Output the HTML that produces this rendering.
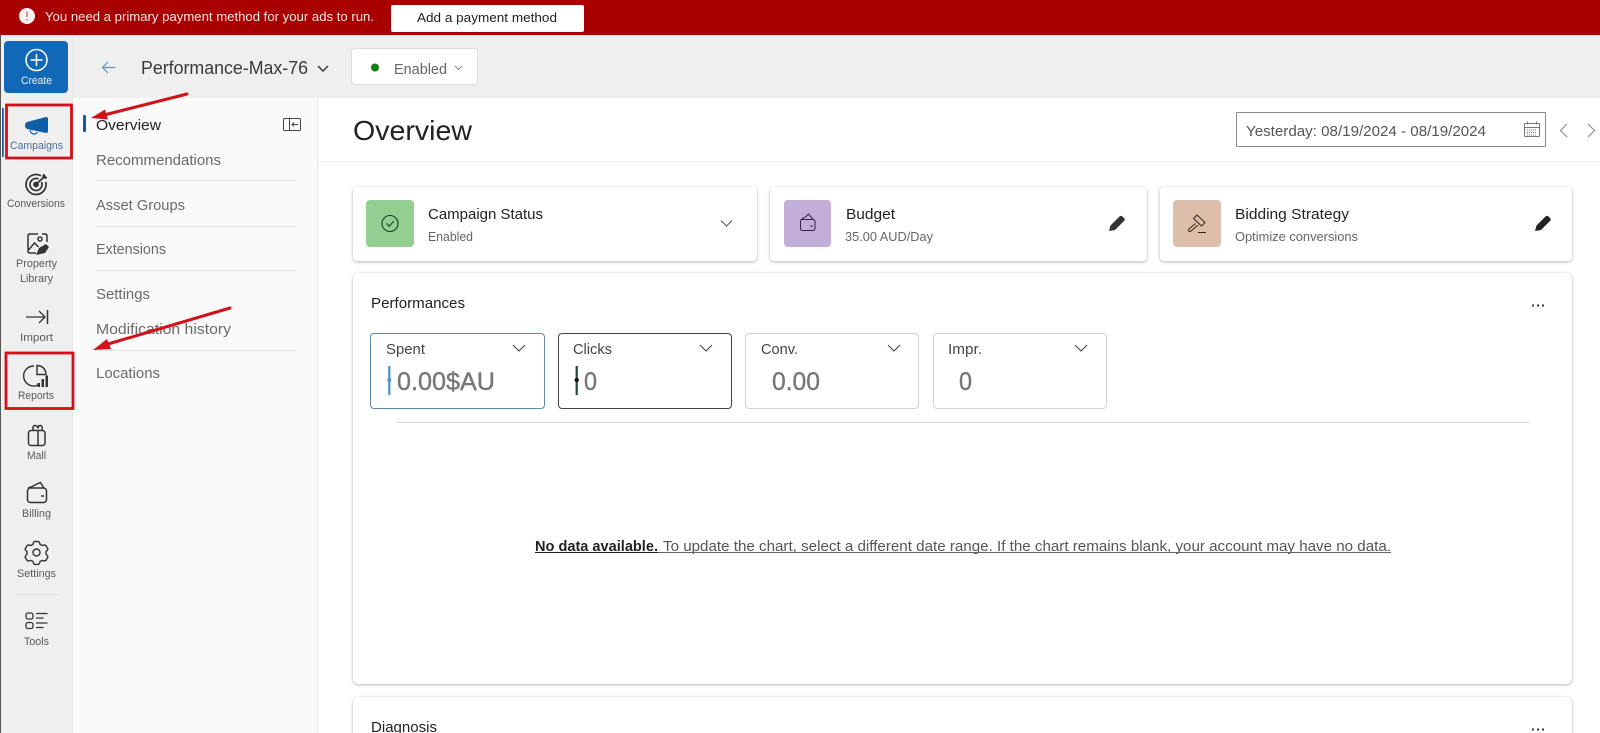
<!DOCTYPE html>
<html lang="en"><head><meta charset="utf-8"><title>Performance-Max-76 Overview</title>
<style>
html,body{margin:0;padding:0;width:1600px;height:733px;overflow:hidden;background:#fff;font-family:"Liberation Sans",sans-serif}
#wrap{position:relative;width:1600px;height:733px;overflow:hidden;background:#fff}
.b{position:absolute;box-sizing:border-box}
.card{background:#fff;border-radius:4px;box-shadow:0 1px 3px rgba(0,0,0,.28),0 0 2px rgba(0,0,0,.05)}
.m{background:#fff;border:1px solid #d2d2d2;border-radius:4px;top:333px;height:76px}
svg{position:absolute;left:0;top:0;display:block}
text{font-family:"Liberation Sans",sans-serif}
.sl{font-size:11px;fill:#5a5a5a}
.nv{font-size:15px;fill:#6a6a6a}
.ct{font-size:15px;fill:#222}
.cs{font-size:12.5px;fill:#666}
.ml{font-size:15px;fill:#444}
.mv{font-size:25px;fill:#777;stroke:#777;stroke-width:.4px}
</style></head><body>
<div id="wrap">
<div class="b" style="left:0;top:35px;width:1600px;height:63px;background:#efefef"></div>
<div class="b" style="left:0;top:35px;width:73px;height:698px;background:#efefef;border-right:1px solid #e6e6e6"></div>
<div class="b" style="left:0;top:35px;width:1px;height:698px;background:#555"></div>
<div class="b" style="left:74px;top:98px;width:244px;height:635px;background:#fafafa;border-right:1px solid #e9e9e9"></div>
<div class="b" style="left:0;top:0;width:1600px;height:35px;background:#a80000"></div>
<div class="b" style="left:391px;top:5px;width:193px;height:27px;background:#fff;border-radius:2px"></div>
<div class="b" style="left:4px;top:41px;width:64px;height:52px;background:#1068b6;border-radius:4px"></div>
<div class="b" style="left:351px;top:48px;width:127px;height:37px;background:#fff;border:1px solid #ddd;border-radius:4px"></div>
<div class="b" style="left:318px;top:161px;width:1282px;height:1px;background:#f0f0f0"></div>
<div class="b" style="left:1236px;top:112px;width:310px;height:35px;background:#fff;border:1px solid #8a8a8a;border-radius:1px"></div>
<div class="b card" style="left:353px;top:187px;width:404px;height:74px"></div>
<div class="b card" style="left:770px;top:187px;width:377px;height:74px"></div>
<div class="b card" style="left:1160px;top:187px;width:412px;height:74px"></div>
<div class="b card" style="left:353px;top:273px;width:1219px;height:411px;border-radius:6px"></div>
<div class="b card" style="left:353px;top:697px;width:1219px;height:60px;border-radius:6px"></div>
<div class="b" style="left:366px;top:200px;width:48px;height:47px;background:#95ce91;border-radius:4px"></div>
<div class="b" style="left:784px;top:200px;width:47px;height:47px;background:#c3add9;border-radius:4px"></div>
<div class="b" style="left:1173px;top:200px;width:48px;height:47px;background:#dcbeaa;border-radius:4px"></div>
<div class="b m" style="left:370px;width:175px;border-color:#5f8aa5"></div>
<div class="b m" style="left:558px;width:174px;border-color:#444"></div>
<div class="b m" style="left:745px;width:174px"></div>
<div class="b m" style="left:933px;width:174px"></div>
<div class="b" style="left:396px;top:422px;width:1134px;height:1px;background:#d8d8d8"></div>

<svg width="1600" height="733" viewBox="0 0 1600 733" xmlns="http://www.w3.org/2000/svg">
<!-- banner -->
<circle cx="27" cy="16" r="8" fill="#fbf3f3"/><path d="M27 11.500v5.500M27 19v1.400" stroke="#c98080" stroke-width="1.600" fill="none"/>
<text x="45" y="21" font-size="13" fill="#f7e6e6" textLength="329" lengthAdjust="spacingAndGlyphs">You need a primary payment method for your ads to run.</text>
<text x="417" y="22" font-size="13" fill="#222" textLength="140" lengthAdjust="spacingAndGlyphs">Add a payment method</text>
<!-- header -->
<path d="M102.500 67.500h13M108 62l-5.500 5.500 5.500 5.500" stroke="#5c92c4" stroke-width="1.200" fill="none"/>
<text x="141" y="74" font-size="18" fill="#3a3a3a" textLength="167" lengthAdjust="spacingAndGlyphs">Performance-Max-76</text>
<path d="M318 66l5 5 5-5" stroke="#333" stroke-width="1.400" fill="none"/>
<circle cx="375" cy="67.500" r="4" fill="#107c10"/>
<text x="394" y="74" font-size="15" fill="#666" textLength="53" lengthAdjust="spacingAndGlyphs">Enabled</text>
<path d="M455 66l3.500 3.500 3.500-3.500" stroke="#888" stroke-width="1" fill="none"/>
<!-- create -->
<circle cx="36.500" cy="60" r="10.500" fill="none" stroke="#fff" stroke-width="1.500"/><path d="M36.500 54v12M30.500 60h12" stroke="#fff" stroke-width="1.500"/>
<text x="21" y="84" font-size="11" fill="#e8f1fa" textLength="31" lengthAdjust="spacingAndGlyphs">Create</text>
<!-- campaigns -->
<rect x="2" y="108" width="1.800" height="49" fill="#2a5f9e"/>
<path d="M27 122L46 117Q48 117 48 119V131Q48 133 46 133L27 129Q25 128 25 125.500Q25 123 27 122Z" fill="#0f5fa8"/>
<path d="M30 130q1 4 4 4t3-2" fill="none" stroke="#0f5fa8" stroke-width="1.200"/>
<text x="10" y="149" font-size="11" fill="#4c6f9c" textLength="53" lengthAdjust="spacingAndGlyphs">Campaigns</text>
<rect x="6.500" y="105" width="65" height="53" fill="none" stroke="#d4101a" stroke-width="2.800"/>
<!-- conversions -->
<g fill="none" stroke="#333" stroke-width="1.700"><path d="M41 175.800A10 10 0 1 0 45.700 181.900"/><path d="M38.500 179A6 6 0 1 0 41.500 182"/><circle cx="36" cy="184.500" r="2" fill="#333"/><path d="M36.500 184l9-8.500M43 178l.8-4M43 178l4-.5"/></g>
<text x="7" y="207" class="sl" textLength="58" lengthAdjust="spacingAndGlyphs">Conversions</text>
<!-- property -->
<g fill="none" stroke="#333" stroke-width="1.500"><path d="M38 234H30q-2 0-2 2v15q0 2 2 2h6M42 234h3q2 0 2 2v6"/><circle cx="40" cy="239" r="2"/><path d="M28.500 250l6-7 4 4"/></g>
<path d="M36 255l3-7 7-4 3 3-4 6z" fill="#333"/>
<text x="16" y="267" class="sl" textLength="41" lengthAdjust="spacingAndGlyphs">Property</text>
<text x="20" y="282" class="sl" textLength="33" lengthAdjust="spacingAndGlyphs">Library</text>
<!-- import -->
<path d="M26 317h19M39 311l6 6-6 6" fill="none" stroke="#333" stroke-width="1.300"/><path d="M47.500 310v14" stroke="#333" stroke-width="1.500"/>
<text x="20" y="341" class="sl" textLength="33" lengthAdjust="spacingAndGlyphs">Import</text>
<!-- reports -->
<g fill="none" stroke="#333" stroke-width="1.400"><path d="M34 366a10 10 0 1 0 4 19"/><path d="M37 365.500q8.500 .5 9 9h-9z"/></g>
<path d="M37.500 383h2.500v4h-2.500zM41.500 379h2.500v8h-2.500zM45.500 375.500h2.500v11.500h-2.500z" fill="#333"/>
<text x="18" y="399" class="sl" textLength="36" lengthAdjust="spacingAndGlyphs">Reports</text>
<rect x="6" y="353" width="67" height="55.500" fill="none" stroke="#d4101a" stroke-width="2.800"/>
<!-- mall -->
<g fill="none" stroke="#333" stroke-width="1.500"><rect x="28.500" y="430.500" width="16.500" height="15" rx="2.500"/><path d="M38 430.500V445M33 430.500v-2.500q0-2.500 2.200-2.500t2.800 3M38 428.500q0-3 2.200-3t2 3v2"/></g>
<text x="27" y="459" class="sl" textLength="19" lengthAdjust="spacingAndGlyphs">Mall</text>
<!-- billing -->
<g fill="none" stroke="#333" stroke-width="1.500"><rect x="27.500" y="488" width="19" height="14.500" rx="3"/><path d="M28 488l3-1 7-3.500 2.500-1 3 5M41 496h3"/></g>
<text x="22" y="517" class="sl" textLength="29" lengthAdjust="spacingAndGlyphs">Billing</text>
<!-- settings -->
<g fill="none" stroke="#333" stroke-width="1.400"><circle cx="36.500" cy="552.500" r="3.500"/><path d="M33.500 542.500l1-1h4l1 1 .6 2 2.300 1 2-.6 1.500 .6 2 3.400-.5 1.300-1.400 1.500v2.500l1.400 1.500.5 1.300-2 3.400-1.500 .6-2-.6-2.300 1-.6 2-1 1h-4l-1-1-.6-2-2.300-1-2 .6-1.500-.6-2-3.400.5-1.300 1.400-1.500v-2.500l-1.400-1.500-.5-1.300 2-3.400 1.500-.6 2 .6 2.300-1z"/></g>
<text x="17" y="577" class="sl" textLength="39" lengthAdjust="spacingAndGlyphs">Settings</text>
<path d="M16 594.500h44" stroke="#e2e2e2"/>
<!-- tools -->
<g fill="none" stroke="#333" stroke-width="1.300"><rect x="26" y="613" width="7" height="6" rx="2"/><rect x="26" y="622.500" width="7" height="6" rx="2"/><path d="M36 613.500h11.500M36 618h7.500M36 623h11.500M36 627.500h7.500"/></g>
<text x="24" y="645" class="sl" textLength="25" lengthAdjust="spacingAndGlyphs">Tools</text>
<!-- nav -->
<rect x="83" y="115" width="3" height="17" rx="1" fill="#0f5c9e"/>
<text x="96" y="130" font-size="15" fill="#222" textLength="65" lengthAdjust="spacingAndGlyphs">Overview</text>
<g fill="none" stroke="#444" stroke-width="1"><rect x="283.500" y="118.500" width="17" height="12" rx="1.500"/><path d="M289.500 118.500v12M298 124.500h-6M294 122.500l-2 2 2 2"/></g>
<text x="96" y="165" class="nv" textLength="125" lengthAdjust="spacingAndGlyphs">Recommendations</text>
<text x="96" y="210" class="nv" textLength="89" lengthAdjust="spacingAndGlyphs">Asset Groups</text>
<text x="96" y="254" class="nv" textLength="70" lengthAdjust="spacingAndGlyphs">Extensions</text>
<text x="96" y="299" class="nv" textLength="54" lengthAdjust="spacingAndGlyphs">Settings</text>
<text x="96" y="334" class="nv" textLength="135" lengthAdjust="spacingAndGlyphs">Modification history</text>
<text x="96" y="378" class="nv" textLength="64" lengthAdjust="spacingAndGlyphs">Locations</text>
<path d="M96 180.500h200M96 226.500h200M96 270.500h200M96 350.500h200" stroke="#e4e4e4"/>
<!-- heading & date -->
<text x="353" y="140" font-size="28" fill="#222" textLength="119" lengthAdjust="spacingAndGlyphs">Overview</text>
<text x="1246" y="136" font-size="15" fill="#555" textLength="240" lengthAdjust="spacingAndGlyphs">Yesterday: 08/19/2024 - 08/19/2024</text>
<g fill="none" stroke="#777" stroke-width="1"><rect x="1524.500" y="123.500" width="15" height="13" rx="1"/><path d="M1524.500 127.500h15M1527.500 121.500v3M1536.500 121.500v3"/><path d="M1527 130h10M1527 132.500h10M1527 135h10" stroke-dasharray="1 1"/></g>
<path d="M1567 124l-6.500 6.500 6.500 6.500M1588 124l6.500 6.500-6.500 6.500" fill="none" stroke="#888" stroke-width="1.100"/>
<!-- cards -->
<circle cx="390" cy="223.500" r="8" fill="none" stroke="#14401c" stroke-width="1.100"/><path d="M386.500 223.500l2.700 2.700 4.500-5" fill="none" stroke="#14401c" stroke-width="1.100"/>
<text x="428" y="219" class="ct" textLength="115" lengthAdjust="spacingAndGlyphs">Campaign Status</text>
<text x="428" y="241" class="cs" textLength="45" lengthAdjust="spacingAndGlyphs">Enabled</text>
<path d="M721 220.500l5.500 5.500 5.500-5.500" fill="none" stroke="#555" stroke-width="1.100"/>
<g fill="none" stroke="#2f1f47" stroke-width="1"><rect x="800.500" y="219.500" width="14.500" height="11" rx="2"/><path d="M801 219.500l5-3 2.500-2.500 3 3.500 1.500 2M810.500 226h2.500"/></g>
<text x="846" y="219" class="ct" textLength="49" lengthAdjust="spacingAndGlyphs">Budget</text>
<text x="845" y="241" class="cs" textLength="88" lengthAdjust="spacingAndGlyphs">35.00 AUD/Day</text>
<path d="M1109 231l1.500-5.500 9-9q1.500-1.500 3 0l1.500 1.500q1.500 1.500 0 3l-9 9z" fill="#333"/>
<g fill="none" stroke="#3a2418" stroke-width="1"><path d="M1193.500 218.500L1197 215 1205 222.500 1201.500 226Z"/><path d="M1195.500 223.500L1188.500 229.500Q1188 231.500 1190.500 231.500L1198 225"/><path d="M1198 232.500h8"/></g>
<text x="1235" y="219" class="ct" textLength="114" lengthAdjust="spacingAndGlyphs">Bidding Strategy</text>
<text x="1235" y="241" class="cs" textLength="123" lengthAdjust="spacingAndGlyphs">Optimize conversions</text>
<path d="M1535 231l1.500-5.500 9-9q1.500-1.500 3 0l1.500 1.500q1.500 1.500 0 3l-9 9z" fill="#222"/>
<!-- performance -->
<text x="371" y="308" class="ct" textLength="94" lengthAdjust="spacingAndGlyphs">Performances</text>
<path d="M1532 304.500h2v2h-2zM1537 304.500h2v2h-2zM1542 304.500h2v2h-2zM1532 728.500h2v2h-2zM1537 728.500h2v2h-2zM1542 728.500h2v2h-2z" fill="#333"/>
<text x="386" y="354" class="ml" textLength="39" lengthAdjust="spacingAndGlyphs">Spent</text>
<text x="573" y="354" class="ml" textLength="39" lengthAdjust="spacingAndGlyphs">Clicks</text>
<text x="761" y="354" class="ml" textLength="37" lengthAdjust="spacingAndGlyphs">Conv.</text>
<text x="948" y="354" class="ml" textLength="34" lengthAdjust="spacingAndGlyphs">Impr.</text>
<text x="397" y="390" class="mv" textLength="98" lengthAdjust="spacingAndGlyphs">0.00$AU</text>
<text x="584" y="390" class="mv" textLength="13" lengthAdjust="spacingAndGlyphs">0</text>
<text x="772" y="390" class="mv" textLength="48" lengthAdjust="spacingAndGlyphs">0.00</text>
<text x="959" y="390" class="mv" textLength="13" lengthAdjust="spacingAndGlyphs">0</text>
<path d="M389.300 366v29" stroke="#4f8fc0" stroke-width="2.200"/><circle cx="389.300" cy="380" r="2" fill="#4f8fc0"/>
<path d="M576.700 366v29" stroke="#24453f" stroke-width="2.200"/><circle cx="576.700" cy="380" r="2.200" fill="#111"/>
<path d="M513 345l6 6 6-6M700 345l6 6 6-6M888 345l6 6 6-6M1075 345l6 6 6-6" fill="none" stroke="#444" stroke-width="1.100"/>
<text x="535" y="551" font-size="14.500" font-weight="bold" fill="#222" textLength="123" lengthAdjust="spacingAndGlyphs">No data available.</text>
<text x="663" y="551" font-size="14.500" fill="#555" textLength="728" lengthAdjust="spacingAndGlyphs">To update the chart, select a different date range. If the chart remains blank, your account may have no data.</text>
<path d="M535 552.500h123" stroke="#222"/><path d="M658 552.500h733" stroke="#666"/>
<text x="371" y="732" class="ct" textLength="66" lengthAdjust="spacingAndGlyphs">Diagnosis</text>
<!-- arrows -->
<path d="M187 94L104 115" stroke="#d4101a" stroke-width="3" stroke-linecap="round"/><path d="M91 118L105 109.500 108 119.500Z" fill="#d4101a"/>
<path d="M230 308L108 344" stroke="#d4101a" stroke-width="3" stroke-linecap="round"/><path d="M93 350L107 339 111 349Z" fill="#d4101a"/>
</svg>
</div>
</body></html>
